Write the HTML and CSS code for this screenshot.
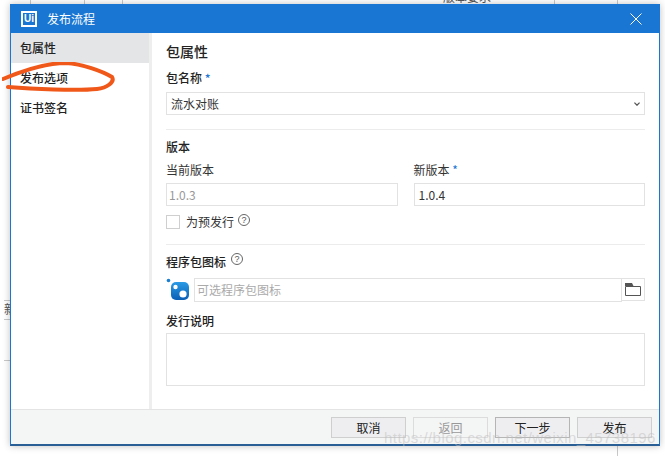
FILE: index.html
```html
<!DOCTYPE html>
<html>
<head>
  <title>发布流程</title>
  <link rel="stylesheet" href="styles.css">
</head>
<body>
  <div class="backdrop">
    <div class="bg-line bg-v1"></div>
    <div class="bg-line bg-v2"></div>
    <div class="bg-line bg-v3"></div>
    <div class="bg-line bg-v4"></div>
    <div class="bg-line bg-v5"></div>
    <div class="bg-line bg-v6"></div>
    <div class="bg-text bg-top">版本要求</div>
    <div class="bg-text bg-left">新</div>
    <div class="bg-line bg-h1"></div>
    <div class="bg-line bg-h2"></div>
    <div class="bg-line bg-h3"></div>
  </div>

  <div class="window">
    <div class="titlebar">
      <span class="logo">Ui</span>
      <span class="title">发布流程</span>
      <svg class="close" width="12" height="12" viewBox="0 0 12 12">
        <path d="M.5.5l11 11M11.5.5l-11 11" stroke="#fff" stroke-width="1" fill="none"/>
      </svg>
    </div>

    <div class="body">
      <div class="sidebar">
        <div class="nav-item active">包属性</div>
        <div class="nav-item">发布选项</div>
        <div class="nav-item">证书签名</div>
      </div>

      <div class="main">
        <h3 class="heading">包属性</h3>
        <label class="label first">包名称 <span class="req">*</span></label>
        <div class="field select">
          <span>流水对账</span>
          <svg width="6" height="4" viewBox="0 0 6 4"><path d="M.4.6l2.6 2.6L5.6.6" stroke="#555" stroke-width="1.3" fill="none"/></svg>
        </div>

        <div class="rule rule-one"></div>

        <div class="group-title">版本</div>
        <div class="versions">
          <div class="version">
            <label class="label">当前版本</label>
            <div class="field disabled">1.0.3</div>
          </div>
          <div class="version">
            <label class="label">新版本 <span class="req">*</span></label>
            <div class="field">1.0.4</div>
          </div>
        </div>
        <div class="check-row">
          <span class="checkbox"></span>
          <span class="check-label">为预发行</span>
          <span class="help">?</span>
        </div>

        <div class="rule rule-two"></div>

        <div class="icon-title"><span>程序包图标</span><span class="help">?</span></div>
        <div class="icon-row">
          <svg class="pkg" width="24" height="24" viewBox="0 0 24 24">
            <defs>
              <linearGradient id="pkgFill" x1="0" y1="0" x2="0" y2="1">
                <stop offset="0" stop-color="#2a9be6"/>
                <stop offset="1" stop-color="#0a5fb4"/>
              </linearGradient>
            </defs>
            <circle cx="2.5" cy="2.5" r="1.8" fill="#1a7fd0"/>
            <rect x="5" y="4" width="18" height="18" rx="5" fill="url(#pkgFill)"/>
            <circle cx="9.5" cy="9" r="2.2" fill="#fff"/>
            <circle cx="17" cy="16" r="3.6" fill="#fff"/>
          </svg>
          <div class="field placeholder">可选程序包图标</div>
          <div class="browse">
            <svg width="16" height="13" viewBox="0 0 16 13">
              <path d="M.5 3.5h15v9H.5z" fill="none" stroke="#555"/>
              <path d="M0 0h7l1.5 3H0z" fill="#555"/>
            </svg>
          </div>
        </div>

        <div class="notes-title">发行说明</div>
        <div class="notes"></div>
      </div>
    </div>

    <div class="footer">
      <button class="btn">取消</button>
      <button class="btn" disabled>返回</button>
      <button class="btn next">下一步</button>
      <button class="btn">发布</button>
    </div>
  </div>

  <svg class="scribble" width="120" height="50" viewBox="0 0 120 50">
    <path d="M1 17C20 9 45 1 64 1c16 1 36 8 46 14 3 5-5 11-15 12-20 2-65 0-89-2" fill="none" stroke="#f0581a" stroke-width="4" stroke-linecap="round"/>
  </svg>

  <div class="watermark">https://blog.csdn.net/weixin_45738196</div>
</body>
</html>
```

FILE: styles.css
```css
html, body {
  margin: 0;
  padding: 0;
}

body {
  position: relative;
  width: 665px;
  height: 456px;
  overflow: hidden;
  background: #fff;
  font-family: "Noto Sans CJK SC", "Liberation Sans", sans-serif;
  font-size: 12px;
  color: #333;
}

/* the app behind the dialog */
.backdrop {
  position: absolute;
  left: 0;
  top: 0;
  width: 665px;
  height: 456px;
}

.bg-line {
  position: absolute;
  background: #c9c9c9;
}

.bg-v1 { left: 30px; top: 0; width: 1px; height: 4px; }
.bg-v2 { left: 84px; top: 0; width: 1px; height: 4px; }
.bg-v3 { left: 122px; top: 0; width: 1px; height: 4px; }
.bg-v4 { left: 554px; top: 0; width: 1px; height: 4px; }
.bg-v5 { left: 617px; top: 0; width: 1px; height: 4px; }
.bg-v6 { left: 617px; top: 446px; width: 1px; height: 10px; }
.bg-h1 { left: 4px; top: 300px; width: 6px; height: 1px; }
.bg-h2 { left: 4px; top: 319px; width: 6px; height: 1px; }
.bg-h3 { left: 4px; top: 360px; width: 6px; height: 1px; }

.bg-text {
  position: absolute;
  color: #555;
  line-height: 12px;
}

.bg-top { left: 443px; top: -9px; }
.bg-left { left: 4px; top: 303px; }

.window {
  position: absolute;
  left: 10px;
  top: 4px;
  width: 650px;
  height: 442px;
  display: flex;
  flex-direction: column;
  box-sizing: border-box;
  background: #fff;
  border: 1px solid #1976d2;
  border-top: 0;
  border-bottom: 2px solid #2a5f96;
  box-shadow: 0 0 7px rgba(0, 0, 0, 0.25);
}

.titlebar {
  height: 29px;
  margin: 0 -1px;
  display: flex;
  align-items: center;
  background: #1976d2;
  color: #fff;
}

.logo {
  box-sizing: border-box;
  width: 16px;
  height: 16px;
  margin-left: 11px;
  border: 2px solid #fff;
  color: #fff;
  font-family: "Liberation Sans", sans-serif;
  font-size: 10px;
  font-weight: bold;
  line-height: 12px;
  text-align: center;
}

.title {
  margin-left: 10px;
  font-size: 12px;
}

.close {
  margin-left: auto;
  margin-right: 18px;
}

.body {
  flex: 1;
  display: flex;
  min-height: 0;
}

.sidebar {
  width: 138px;
  border-right: 3px solid #eeeeee;
}

.nav-item {
  height: 30px;
  padding-left: 9px;
  line-height: 29px;
  color: #222;
  font-weight: 500;
}

.nav-item.active {
  background: #e3e5e7;
}

.main {
  flex: 1;
  padding: 0 14px;
}

.heading {
  margin: 8px 0 0;
  height: 20px;
  font-size: 14px;
  line-height: 20px;
  font-weight: 500;
  color: #222;
}

.label {
  display: block;
  height: 18px;
  line-height: 18px;
  color: #333;
}

.label.first {
  margin-top: 8px;
  margin-bottom: 5px;
  font-weight: 500;
  color: #222;
}

.req {
  color: #1976d2;
}

.field {
  box-sizing: border-box;
  height: 23px;
  padding: 0 4px;
  border: 1px solid #e2e2e2;
  background: #fff;
  line-height: 21px;
  color: #333;
}

.select {
  display: flex;
  align-items: center;
  justify-content: space-between;
  padding-right: 4px;
}

.rule {
  height: 1px;
  background: #ececec;
}

.rule-one {
  margin-top: 14px;
}

.group-title {
  margin-top: 8px;
  height: 18px;
  line-height: 18px;
  font-weight: 500;
  color: #222;
}

.versions {
  display: flex;
  gap: 16px;
  margin-top: 5px;
}

.version {
  flex: 1;
}

.version .label {
  margin-bottom: 4px;
}

.disabled {
  padding-left: 2px;
  color: #999;
}

.check-row {
  display: flex;
  align-items: center;
  margin-top: 8px;
  height: 15px;
}

.checkbox {
  box-sizing: border-box;
  width: 14px;
  height: 14px;
  border: 1px solid #cfcfcf;
}

.check-label {
  margin-left: 6px;
}

.help {
  box-sizing: border-box;
  width: 12px;
  height: 12px;
  margin-left: 4px;
  border: 1px solid #666;
  border-radius: 50%;
  font-family: "Liberation Sans", sans-serif;
  font-size: 9px;
  line-height: 10px;
  text-align: center;
  color: #555;
  position: relative;
  top: -2px;
}

.rule-two {
  margin-top: 15px;
}

.icon-title {
  display: flex;
  align-items: center;
  margin-top: 7px;
  height: 18px;
  font-weight: 500;
  color: #222;
}

.icon-title .help {
  margin-left: 5px;
  font-weight: 400;
}

.icon-row {
  display: flex;
  margin-top: 8px;
  height: 24px;
}

.pkg {
  flex: none;
  margin-right: 4px;
}

.placeholder {
  flex: 1;
  height: 24px;
  padding-left: 2px;
  color: #aaa;
}

.browse {
  box-sizing: border-box;
  width: 23px;
  height: 23px;
  display: flex;
  align-items: center;
  justify-content: center;
  border: 1px solid #e2e2e2;
  border-left: 0;
}

.notes-title {
  margin-top: 10px;
  height: 18px;
  line-height: 18px;
  font-weight: 500;
  color: #222;
}

.notes {
  box-sizing: border-box;
  height: 53px;
  margin-top: 3px;
  border: 1px solid #e2e2e2;
}

.footer {
  box-sizing: border-box;
  height: 35px;
  display: flex;
  justify-content: flex-end;
  gap: 7px;
  padding: 7px 7px 0 0;
  background: #f4f5f5;
  border-top: 1px solid #e4e4e4;
}

.btn {
  box-sizing: border-box;
  width: 75px;
  height: 21px;
  padding: 0;
  border: 1px solid #cfcfcf;
  background: #eeeef0;
  font-family: inherit;
  font-size: 12px;
  line-height: 19px;
  color: #222;
}

.btn:disabled {
  background: #f4f5f5;
  border-color: #dcdcdc;
  color: #999;
}

.btn.next {
  border-color: #b5b5b5;
}

.scribble {
  position: absolute;
  left: 2px;
  top: 62px;
}

.watermark {
  position: absolute;
  left: 384px;
  top: 429px;
  font-family: "Liberation Sans", sans-serif;
  font-size: 15px;
  line-height: 18px;
  letter-spacing: 0.45px;
  white-space: nowrap;
  color: rgba(190, 190, 190, 0.5);
}
```
